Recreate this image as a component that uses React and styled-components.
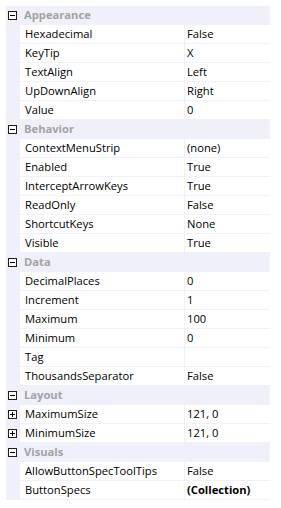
import React from "react";
import styled, { createGlobalStyle } from "styled-components";

const Global = createGlobalStyle`
  html, body { margin: 0; padding: 0; background: #ffffff; }
  body { font-family: "Open Sans", "Noto Sans", sans-serif; }
`;

const LINE = "#f0f0fa";

const Grid = styled.div`
  margin: 6px 0 0 6px;
  width: 264px;
  display: flex;
  flex-direction: column;
  font-size: 11.2px;
  color: #000;
`;

const CategoryRow = styled.div`
  height: 19px;
  box-sizing: border-box;
  background: ${LINE};
  display: flex;
  align-items: center;
  padding-left: 2px;
`;

const CategoryLabel = styled.span`
  margin-left: 7px;
  margin-top: -2px;
  font-weight: 700;
  color: #a3a3a3;
`;

const PropRow = styled.div`
  height: 19px;
  box-sizing: border-box;
  display: grid;
  grid-template-columns: 14px 164px 1px 1fr;
  border-bottom: 1px solid ${LINE};
`;

const Margin = styled.div`
  background: ${LINE};
  display: flex;
  align-items: center;
  padding-left: 2px;
  margin-bottom: -1px;
`;

const NameCell = styled.div`
  padding-left: 5px;
  padding-bottom: 2px;
  display: flex;
  align-items: center;
  white-space: nowrap;
  overflow: hidden;
`;

const Splitter = styled.div`
  background: ${LINE};
`;

const ValueCell = styled.div`
  padding-left: 2px;
  padding-bottom: 2px;
  display: flex;
  align-items: center;
  white-space: nowrap;
  overflow: hidden;
  font-weight: ${(p) => (p.$bold ? 700 : 400)};
`;

const Glyph = ({ plus }) => (
  <svg width="9" height="9" viewBox="0 0 9 9" style={{ display: "block" }}>
    <rect x="0.5" y="0.5" width="8" height="8" fill="#fff" stroke="#1e1e1e" />
    <line x1="2" y1="4.5" x2="7" y2="4.5" stroke="#000" />
    {plus && <line x1="4.5" y1="2" x2="4.5" y2="7" stroke="#000" />}
  </svg>
);

const data = [
  ["Appearance", [
    ["Hexadecimal", "False"],
    ["KeyTip", "X"],
    ["TextAlign", "Left"],
    ["UpDownAlign", "Right"],
    ["Value", "0"],
  ]],
  ["Behavior", [
    ["ContextMenuStrip", "(none)"],
    ["Enabled", "True"],
    ["InterceptArrowKeys", "True"],
    ["ReadOnly", "False"],
    ["ShortcutKeys", "None"],
    ["Visible", "True"],
  ]],
  ["Data", [
    ["DecimalPlaces", "0"],
    ["Increment", "1"],
    ["Maximum", "100"],
    ["Minimum", "0"],
    ["Tag", ""],
    ["ThousandsSeparator", "False"],
  ]],
  ["Layout", [
    ["MaximumSize", "121, 0", true],
    ["MinimumSize", "121, 0", true],
  ]],
  ["Visuals", [
    ["AllowButtonSpecToolTips", "False"],
    ["ButtonSpecs", "(Collection)", false, true],
  ]],
];

export default function App() {
  return (
    <>
      <Global />
      <Grid>
        {data.map(([cat, rows]) => (
          <React.Fragment key={cat}>
            <CategoryRow>
              <Glyph />
              <CategoryLabel>{cat}</CategoryLabel>
            </CategoryRow>
            {rows.map(([name, value, expandable, bold]) => (
              <PropRow key={name}>
                <Margin>{expandable && <Glyph plus />}</Margin>
                <NameCell>{name}</NameCell>
                <Splitter />
                <ValueCell $bold={bold}>{value}</ValueCell>
              </PropRow>
            ))}
          </React.Fragment>
        ))}
      </Grid>
    </>
  );
}
